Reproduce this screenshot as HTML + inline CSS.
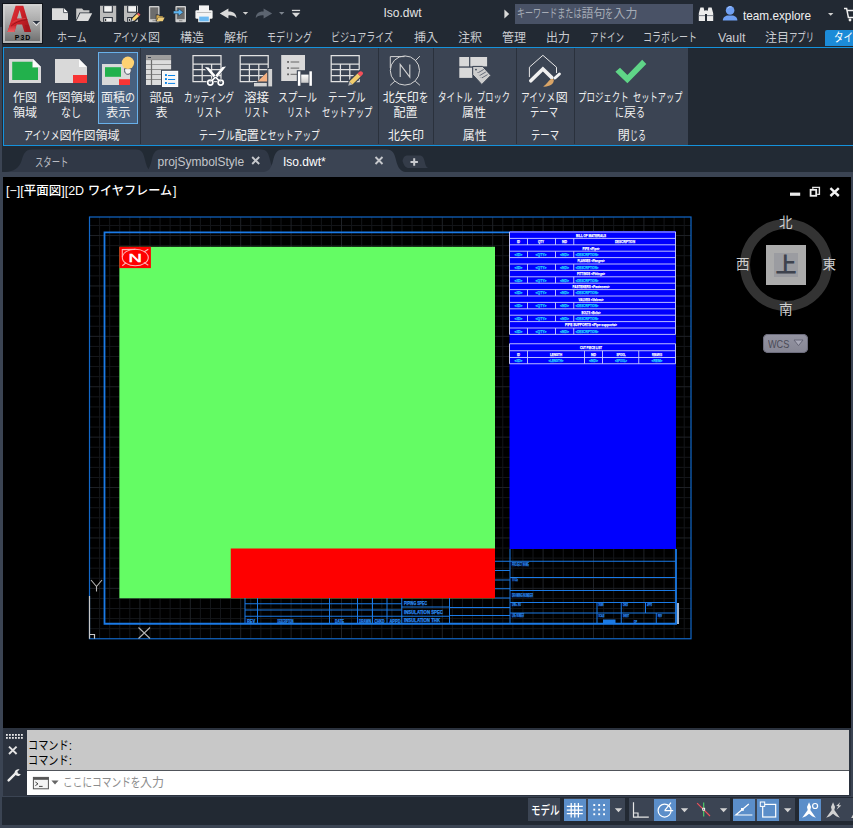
<!DOCTYPE html>
<html lang="ja"><head><meta charset="utf-8"><title>Iso.dwt</title>
<style>
html,body{margin:0;padding:0;background:#3b4453;}
body{width:853px;height:828px;position:relative;overflow:hidden;font-family:"Liberation Sans","Noto Sans CJK JP",sans-serif;font-size:12px;}
.b{position:absolute;}
.t{position:absolute;white-space:nowrap;}
.r{display:inline-block;transform-origin:0 50%;white-space:nowrap;vertical-align:top;}
svg{position:absolute;overflow:visible;}
</style></head><body>
<div class="b" style="left:0px;top:0px;width:853px;height:47px;background:#222933;"></div>
<div class="b" style="left:0px;top:27px;width:2px;height:20px;background:#3b4453;"></div>
<div class="b" style="left:0px;top:47px;width:853px;height:99px;background:#222933;"></div>
<div class="b" style="left:4px;top:48px;width:684px;height:97px;background:#3b4453;"></div>
<div class="b" style="left:0px;top:47px;width:2px;height:125px;background:#3b4453;"></div>
<div class="b" style="left:3px;top:47px;width:850px;height:1px;background:#1592dc;"></div>
<div class="b" style="left:3px;top:145px;width:850px;height:1px;background:#1592dc;"></div>
<div class="b" style="left:3px;top:47px;width:1px;height:99px;background:#1592dc;"></div>
<div class="b" style="left:2px;top:146px;width:851px;height:26px;background:#222a34;"></div>
<div class="b" style="left:0px;top:172px;width:853px;height:656px;background:#3b4453;"></div>
<div class="b" style="left:3px;top:177px;width:848px;height:551px;background:#000;"></div>
<div class="b" style="left:3px;top:728px;width:848px;height:67.5px;background:#2b323e;"></div>
<div class="b" style="left:27px;top:730px;width:822px;height:40px;background:#c8c8c8;"></div>
<div class="b" style="left:27px;top:771px;width:822px;height:24px;background:#fff;"></div>
<div class="b" style="left:27px;top:770px;width:822px;height:1px;background:#50545a;"></div>
<div class="b" style="left:2px;top:797px;width:851px;height:28px;background:#222933;"></div>
<div class="b" style="left:2.4px;top:3.2px;width:40.6px;height:40.6px;background:#10141a"></div>
<div class="b" style="left:3.4px;top:4.2px;width:38.6px;height:38.6px;background:linear-gradient(#d2d2d2,#b4b4b4)"></div>
<div class="b" style="left:5.2px;top:5.8px;width:35px;height:35.2px;background:linear-gradient(#c9c9c9,#a9a9a9 45%,#727272)"></div>
<div class="t" style="left:57.00px;top:29.50px;height:16px;line-height:16px;font-size:12px;color:#c9cbd0;"><span class="r" style="width:30.00px;transform:scaleX(0.8333)">ホーム</span></div>
<div class="t" style="left:113.00px;top:29.50px;height:16px;line-height:16px;font-size:12px;color:#c9cbd0;"><span class="r" style="width:35.00px;transform:scaleX(0.7292)">アイソメ</span><span class="r" style="width:12.00px">図</span></div>
<div class="t" style="left:180.00px;top:29.50px;height:16px;line-height:16px;font-size:12px;color:#c9cbd0;"><span class="r" style="width:24.00px">構造</span></div>
<div class="t" style="left:224.00px;top:29.50px;height:16px;line-height:16px;font-size:12px;color:#c9cbd0;"><span class="r" style="width:24.00px">解析</span></div>
<div class="t" style="left:267.00px;top:29.50px;height:16px;line-height:16px;font-size:12px;color:#c9cbd0;"><span class="r" style="width:45.00px;transform:scaleX(0.7500)">モデリング</span></div>
<div class="t" style="left:331.00px;top:29.50px;height:16px;line-height:16px;font-size:12px;color:#c9cbd0;"><span class="r" style="width:63.00px;transform:scaleX(0.7500)">ビジュアライズ</span></div>
<div class="t" style="left:414.00px;top:29.50px;height:16px;line-height:16px;font-size:12px;color:#c9cbd0;"><span class="r" style="width:24.00px">挿入</span></div>
<div class="t" style="left:458.00px;top:29.50px;height:16px;line-height:16px;font-size:12px;color:#c9cbd0;"><span class="r" style="width:24.00px">注釈</span></div>
<div class="t" style="left:502.00px;top:29.50px;height:16px;line-height:16px;font-size:12px;color:#c9cbd0;"><span class="r" style="width:24.00px">管理</span></div>
<div class="t" style="left:546.00px;top:29.50px;height:16px;line-height:16px;font-size:12px;color:#c9cbd0;"><span class="r" style="width:24.00px">出力</span></div>
<div class="t" style="left:590.00px;top:29.50px;height:16px;line-height:16px;font-size:12px;color:#c9cbd0;"><span class="r" style="width:34.00px;transform:scaleX(0.7083)">アドイン</span></div>
<div class="t" style="left:643.00px;top:29.50px;height:16px;line-height:16px;font-size:12px;color:#c9cbd0;"><span class="r" style="width:54.00px;transform:scaleX(0.7500)">コラボレート</span></div>
<div class="t" style="left:718.00px;top:29.50px;height:16px;line-height:16px;font-size:12px;color:#c9cbd0;"><span class="r" style="width:27.50px;transform:scaleX(1.0393)">Vault</span></div>
<div class="t" style="left:765.00px;top:29.50px;height:16px;line-height:16px;font-size:12px;color:#c9cbd0;"><span class="r" style="width:24.00px">注目</span><span class="r" style="width:25.00px;transform:scaleX(0.6944)">アプリ</span></div>
<div class="b" style="left:825px;top:30px;width:28px;height:16px;background:#1c8bd8;border-radius:2px 0 0 0"></div>
<div class="t" style="left:834.00px;top:29.50px;height:16px;line-height:16px;font-size:12px;color:#fff;"><span class="r" style="width:19.00px;transform:scaleX(0.7917)">タイ</span></div>
<div class="t" style="left:383.50px;top:5.00px;height:16px;line-height:16px;font-size:12px;color:#e4e4e4;"><span class="r" style="width:37.50px">Iso.dwt</span></div>
<div class="b" style="left:514.7px;top:4px;width:178px;height:20px;background:#495266;"></div>
<div class="t" style="left:517.00px;top:6.00px;height:16px;line-height:16px;font-size:12px;color:#a6acb6;"><span class="r" style="width:64.44px;transform:scaleX(0.6713)">キーワードまたは</span><span class="r" style="width:24.00px">語句</span><span class="r" style="width:8.06px;transform:scaleX(0.6713)">を</span><span class="r" style="width:24.00px">入力</span></div>
<div class="t" style="left:743.00px;top:7.50px;height:16px;line-height:16px;font-size:13px;color:#f0f0f0;"><span class="r" style="width:68.00px;transform:scaleX(0.9049)">team.explore</span></div>
<div class="b" style="left:98px;top:52px;width:40px;height:72px;background:#47607f;border:1px solid #68b0ea;box-sizing:border-box"></div>
<div class="b" style="left:140px;top:48px;width:1px;height:96px;background:#2a313c;"></div>
<div class="b" style="left:378px;top:48px;width:1px;height:96px;background:#2a313c;"></div>
<div class="b" style="left:433px;top:48px;width:1px;height:96px;background:#2a313c;"></div>
<div class="b" style="left:516px;top:48px;width:1px;height:96px;background:#2a313c;"></div>
<div class="b" style="left:574px;top:48px;width:1px;height:96px;background:#2a313c;"></div>
<div class="t" style="left:12.90px;top:90.00px;height:16px;line-height:16px;font-size:12px;color:#f0f0f0;"><span class="r" style="width:24.00px">作図</span></div>
<div class="t" style="left:12.90px;top:105.00px;height:16px;line-height:16px;font-size:12px;color:#f0f0f0;"><span class="r" style="width:24.00px">領域</span></div>
<div class="t" style="left:46.20px;top:90.00px;height:16px;line-height:16px;font-size:12px;color:#f0f0f0;"><span class="r" style="width:49.00px;transform:scaleX(1.0208)">作図領域</span></div>
<div class="t" style="left:60.70px;top:105.00px;height:16px;line-height:16px;font-size:12px;color:#f0f0f0;"><span class="r" style="width:20.00px;transform:scaleX(0.8333)">なし</span></div>
<div class="t" style="left:100.90px;top:90.00px;height:16px;line-height:16px;font-size:12px;color:#f0f0f0;"><span class="r" style="width:24.00px">面積</span><span class="r" style="width:10.00px;transform:scaleX(0.8333)">の</span></div>
<div class="t" style="left:105.65px;top:105.00px;height:16px;line-height:16px;font-size:12px;color:#f0f0f0;"><span class="r" style="width:24.50px;transform:scaleX(1.0208)">表示</span></div>
<div class="t" style="left:149.40px;top:90.00px;height:16px;line-height:16px;font-size:12px;color:#f0f0f0;"><span class="r" style="width:24.00px">部品</span></div>
<div class="t" style="left:155.40px;top:105.00px;height:16px;line-height:16px;font-size:12px;color:#f0f0f0;"><span class="r" style="width:12.00px">表</span></div>
<div class="t" style="left:183.85px;top:90.00px;height:16px;line-height:16px;font-size:12px;color:#f0f0f0;"><span class="r" style="width:50.50px;transform:scaleX(0.7014)">カッティング</span></div>
<div class="t" style="left:196.30px;top:105.00px;height:16px;line-height:16px;font-size:12px;color:#f0f0f0;"><span class="r" style="width:26.00px;transform:scaleX(0.7222)">リスト</span></div>
<div class="t" style="left:243.50px;top:90.00px;height:16px;line-height:16px;font-size:12px;color:#f0f0f0;"><span class="r" style="width:25.00px;transform:scaleX(1.0417)">溶接</span></div>
<div class="t" style="left:243.70px;top:105.00px;height:16px;line-height:16px;font-size:12px;color:#f0f0f0;"><span class="r" style="width:25.00px;transform:scaleX(0.6944)">リスト</span></div>
<div class="t" style="left:277.50px;top:90.00px;height:16px;line-height:16px;font-size:12px;color:#f0f0f0;"><span class="r" style="width:39.00px;transform:scaleX(0.8125)">スプール</span></div>
<div class="t" style="left:287.00px;top:105.00px;height:16px;line-height:16px;font-size:12px;color:#f0f0f0;"><span class="r" style="width:24.00px;transform:scaleX(0.6667)">リスト</span></div>
<div class="t" style="left:328.00px;top:90.00px;height:16px;line-height:16px;font-size:12px;color:#f0f0f0;"><span class="r" style="width:38.00px;transform:scaleX(0.7917)">テーブル</span></div>
<div class="t" style="left:322.35px;top:105.00px;height:16px;line-height:16px;font-size:12px;color:#f0f0f0;"><span class="r" style="width:50.50px;transform:scaleX(0.7014)">セットアップ</span></div>
<div class="t" style="left:382.65px;top:90.00px;height:16px;line-height:16px;font-size:12px;color:#f0f0f0;"><span class="r" style="width:36.00px">北矢印</span><span class="r" style="width:9.50px;transform:scaleX(0.7917)">を</span></div>
<div class="t" style="left:393.40px;top:105.00px;height:16px;line-height:16px;font-size:12px;color:#f0f0f0;"><span class="r" style="width:24.00px">配置</span></div>
<div class="t" style="left:438.40px;top:90.00px;height:16px;line-height:16px;font-size:12px;color:#f0f0f0;"><span class="r" style="width:34.16px;transform:scaleX(0.7117)">タイトル</span><span class="r" style="width:3.96px">&nbsp;</span><span class="r" style="width:32.88px;transform:scaleX(0.6850)">ブロック</span></div>
<div class="t" style="left:461.90px;top:105.00px;height:16px;line-height:16px;font-size:12px;color:#f0f0f0;"><span class="r" style="width:24.00px">属性</span></div>
<div class="t" style="left:521.15px;top:90.00px;height:16px;line-height:16px;font-size:12px;color:#f0f0f0;"><span class="r" style="width:34.50px;transform:scaleX(0.7188)">アイソメ</span><span class="r" style="width:12.00px">図</span></div>
<div class="t" style="left:530.40px;top:105.00px;height:16px;line-height:16px;font-size:12px;color:#f0f0f0;"><span class="r" style="width:28.00px;transform:scaleX(0.7778)">テーマ</span></div>
<div class="t" style="left:578.10px;top:90.00px;height:16px;line-height:16px;font-size:12px;color:#f0f0f0;"><span class="r" style="width:50.67px;transform:scaleX(0.7037)">プロジェクト</span><span class="r" style="width:3.96px">&nbsp;</span><span class="r" style="width:49.37px;transform:scaleX(0.6857)">セットアップ</span></div>
<div class="t" style="left:615.10px;top:105.00px;height:16px;line-height:16px;font-size:12px;color:#f0f0f0;"><span class="r" style="width:9.00px;transform:scaleX(0.7500)">に</span><span class="r" style="width:12.00px">戻</span><span class="r" style="width:9.00px;transform:scaleX(0.7500)">る</span></div>
<div class="t" style="left:23.50px;top:128.00px;height:16px;line-height:16px;font-size:12px;color:#f0f0f0;"><span class="r" style="width:36.00px;transform:scaleX(0.7500)">アイソメ</span><span class="r" style="width:60.00px">図作図領域</span></div>
<div class="t" style="left:198.50px;top:128.00px;height:16px;line-height:16px;font-size:12px;color:#f0f0f0;"><span class="r" style="width:36.26px;transform:scaleX(0.7555)">テーブル</span><span class="r" style="width:24.00px">配置</span><span class="r" style="width:60.74px;transform:scaleX(0.7231)">とセットアップ</span></div>
<div class="t" style="left:388.00px;top:128.00px;height:16px;line-height:16px;font-size:12px;color:#f0f0f0;"><span class="r" style="width:36.00px">北矢印</span></div>
<div class="t" style="left:462.80px;top:128.00px;height:16px;line-height:16px;font-size:12px;color:#f0f0f0;"><span class="r" style="width:24.00px">属性</span></div>
<div class="t" style="left:530.60px;top:128.00px;height:16px;line-height:16px;font-size:12px;color:#f0f0f0;"><span class="r" style="width:28.00px;transform:scaleX(0.7778)">テーマ</span></div>
<div class="t" style="left:617.70px;top:128.00px;height:16px;line-height:16px;font-size:12px;color:#f0f0f0;"><span class="r" style="width:12.00px">閉</span><span class="r" style="width:16.00px;transform:scaleX(0.6667)">じる</span></div>
<svg class="b" style="left:0;top:146px" width="853" height="31" viewBox="0 146 853 31">
<path d="M5 172 C14 171.5 19 168 21.5 161 C23.5 154 25 149.5 32 149.5 L136 149.5 C142.5 149.5 143.5 154 145 160 C146.5 166 148 171 153 172 Z" fill="#303846"/>
<path d="M144 172 C148.5 171 150 167 151.5 161 C153 154 154.5 149.5 161 149.5 L261 149.5 C267.5 149.5 268.5 154 270 160 C271.5 166 273 171 278 172 Z" fill="#303846"/>
<path d="M264 172 C269.5 171 271.5 167 273 161 C274.5 154 276.5 149.5 283 149.5 L386.5 149.5 C393 149.5 394.5 154 396 160 C397.5 166 399.5 171 405 172 Z" fill="#3b4453"/>
<path d="M402.5 161 C403.5 157 404.5 155.5 408 155.5 L419 155.5 C422.5 155.5 423.5 157 424.5 161 C425.5 165 426 167 428 168 L409 168 C405.5 168 404 165.5 402.5 161 Z" fill="#343c49"/>
<path d="M410.5 162 h7.4 M414.2 158.3 v7.4" stroke="#c8cace" stroke-width="2" fill="none"/>
<path d="M252.2 157 l7 7 M259.2 157 l-7 7" stroke="#c6c8cc" stroke-width="1.9" fill="none"/>
<path d="M375.5 157 l7 7 M382.5 157 l-7 7" stroke="#c6c8cc" stroke-width="1.9" fill="none"/>
</svg>
<div class="t" style="left:34.50px;top:154.50px;height:16px;line-height:16px;font-size:12px;color:#b9bcc2;"><span class="r" style="width:33.50px;transform:scaleX(0.6979)">スタート</span></div>
<div class="t" style="left:157.50px;top:154.00px;height:16px;line-height:16px;font-size:12px;color:#c4c6ca;"><span class="r" style="width:85.50px">projSymbolStyle</span></div>
<div class="t" style="left:283.00px;top:154.00px;height:16px;line-height:16px;font-size:12px;color:#ffffff;"><span class="r" style="width:43.00px">Iso.dwt*</span></div>
<div class="t" style="left:6.00px;top:183.00px;height:16px;line-height:16px;font-size:12.5px;color:#ffffff;font-weight:500;"><span class="r" style="width:17.72px">[−][</span><span class="r" style="width:37.50px">平面図</span><span class="r" style="width:22.92px">][2D</span><span class="r" style="width:4.12px">&nbsp;</span><span class="r" style="width:84.76px;transform:scaleX(0.9687)">ワイヤフレーム</span><span class="r" style="width:3.47px">]</span></div>
<div class="t" style="left:28.00px;top:737.50px;height:16px;line-height:16px;font-size:12px;color:#000;"><span class="r" style="width:40.67px;transform:scaleX(0.8472)">コマンド</span><span class="r" style="width:3.33px">:</span></div>
<div class="t" style="left:28.00px;top:753.00px;height:16px;line-height:16px;font-size:12px;color:#000;"><span class="r" style="width:40.67px;transform:scaleX(0.8472)">コマンド</span><span class="r" style="width:3.33px">:</span></div>
<div class="t" style="left:62.50px;top:774.50px;height:16px;line-height:16px;font-size:12px;color:#8c8c8c;"><span class="r" style="width:77.50px;transform:scaleX(0.8073)">ここにコマンドを</span><span class="r" style="width:24.00px">入力</span></div>
<div class="b" style="left:528px;top:798px;width:32px;height:23.4px;background:#3b4453;"></div>
<div class="b" style="left:563.6px;top:798px;width:61.4px;height:23.4px;background:#3b4453;"></div>
<div class="b" style="left:628.8px;top:798px;width:101px;height:23.4px;background:#3b4453;"></div>
<div class="b" style="left:732.6px;top:798px;width:62px;height:23.4px;background:#3b4453;"></div>
<div class="b" style="left:798.6px;top:798px;width:54.4px;height:23.4px;background:#3b4453;"></div>
<div class="t" style="left:531.00px;top:802.50px;height:16px;line-height:16px;font-size:12px;color:#ffffff;font-weight:500;"><span class="r" style="width:28.50px;transform:scaleX(0.7917)">モデル</span></div>
<div class="b" style="left:563.7px;top:799px;width:22px;height:22px;background:#5b8ec9;"></div>
<div class="b" style="left:588px;top:799px;width:22px;height:22px;background:#5b8ec9;"></div>
<div class="b" style="left:654px;top:799px;width:22px;height:22px;background:#5b8ec9;"></div>
<div class="b" style="left:732.8px;top:799px;width:22px;height:22px;background:#5b8ec9;"></div>
<div class="b" style="left:757.2px;top:799px;width:22px;height:22px;background:#5b8ec9;"></div>
<div class="b" style="left:799px;top:799px;width:22px;height:22px;background:#5b8ec9;"></div>
<div class="b" style="left:739.5px;top:219px;width:92px;height:92px;border-radius:50%;border:10.5px solid #333;box-sizing:border-box"></div>
<div class="b" style="left:766px;top:245px;width:40px;height:40px;background:#ababab;"></div>
<div class="b" style="left:774px;top:253px;width:24.2px;height:23.6px;background:#9b9ca1;"></div>
<div class="t" style="left:775.60px;top:251.00px;height:28px;line-height:28px;font-size:21px;color:#3e434e;font-weight:700;"><span class="r" style="width:21.00px">上</span></div>
<div class="t" style="left:778.95px;top:213.70px;height:18px;line-height:18px;font-size:13.5px;color:#cdcdcd;"><span class="r" style="width:13.50px">北</span></div>
<div class="t" style="left:778.95px;top:300.70px;height:18px;line-height:18px;font-size:13.5px;color:#cdcdcd;"><span class="r" style="width:13.50px">南</span></div>
<div class="t" style="left:736.05px;top:256.20px;height:18px;line-height:18px;font-size:13.5px;color:#cdcdcd;"><span class="r" style="width:13.50px">西</span></div>
<div class="t" style="left:822.55px;top:255.70px;height:18px;line-height:18px;font-size:13.5px;color:#cdcdcd;"><span class="r" style="width:13.50px">東</span></div>
<div class="b" style="left:763px;top:333.5px;width:44.5px;height:19.5px;border-radius:5px;background:linear-gradient(#9494a2,#868694);box-shadow:inset 0 0 0 1px #6c6c7c"></div>
<div class="t" style="left:767.50px;top:335.60px;height:16px;line-height:16px;font-size:11.5px;color:#4a4a56;"><span class="r" style="width:21.30px;transform:scaleX(0.7939)">WCS</span></div>
<svg class="b" style="left:0;top:0" width="853" height="828" viewBox="0 0 853 828" font-family="'Liberation Sans',sans-serif">
<path d="M99.58 217.00V638.75M109.66 217.00V638.75M119.74 217.00V638.75M129.82 217.00V638.75M149.98 217.00V638.75M160.06 217.00V638.75M170.14 217.00V638.75M180.22 217.00V638.75M200.38 217.00V638.75M210.46 217.00V638.75M220.54 217.00V638.75M230.62 217.00V638.75M250.78 217.00V638.75M260.86 217.00V638.75M270.94 217.00V638.75M281.02 217.00V638.75M301.18 217.00V638.75M311.26 217.00V638.75M321.34 217.00V638.75M331.42 217.00V638.75M351.58 217.00V638.75M361.66 217.00V638.75M371.74 217.00V638.75M381.82 217.00V638.75M401.98 217.00V638.75M412.06 217.00V638.75M422.14 217.00V638.75M432.22 217.00V638.75M452.38 217.00V638.75M462.46 217.00V638.75M472.54 217.00V638.75M482.62 217.00V638.75M502.78 217.00V638.75M512.86 217.00V638.75M522.94 217.00V638.75M533.02 217.00V638.75M553.18 217.00V638.75M563.26 217.00V638.75M573.34 217.00V638.75M583.42 217.00V638.75M603.58 217.00V638.75M613.66 217.00V638.75M623.74 217.00V638.75M633.82 217.00V638.75M653.98 217.00V638.75M664.06 217.00V638.75M674.14 217.00V638.75M684.22 217.00V638.75M89.50 628.67H691.00M89.50 618.59H691.00M89.50 608.51H691.00M89.50 598.43H691.00M89.50 578.27H691.00M89.50 568.19H691.00M89.50 558.11H691.00M89.50 548.03H691.00M89.50 527.87H691.00M89.50 517.79H691.00M89.50 507.71H691.00M89.50 497.63H691.00M89.50 477.47H691.00M89.50 467.39H691.00M89.50 457.31H691.00M89.50 447.23H691.00M89.50 427.07H691.00M89.50 416.99H691.00M89.50 406.91H691.00M89.50 396.83H691.00M89.50 376.67H691.00M89.50 366.59H691.00M89.50 356.51H691.00M89.50 346.43H691.00M89.50 326.27H691.00M89.50 316.19H691.00M89.50 306.11H691.00M89.50 296.03H691.00M89.50 275.87H691.00M89.50 265.79H691.00M89.50 255.71H691.00M89.50 245.63H691.00M89.50 225.47H691.00" stroke="#14161a" stroke-width="1" fill="none"/>
<path d="M139.90 217.00V638.75M190.30 217.00V638.75M240.70 217.00V638.75M291.10 217.00V638.75M341.50 217.00V638.75M391.90 217.00V638.75M442.30 217.00V638.75M492.70 217.00V638.75M543.10 217.00V638.75M593.50 217.00V638.75M643.90 217.00V638.75M89.50 588.35H691.00M89.50 537.95H691.00M89.50 487.55H691.00M89.50 437.15H691.00M89.50 386.75H691.00M89.50 336.35H691.00M89.50 285.95H691.00M89.50 235.55H691.00" stroke="#1f2227" stroke-width="1" fill="none"/>
<rect x="119.4" y="246.8" width="375.6" height="351.5" fill="#64fc64"/>
<rect x="119.4" y="246.8" width="31.5" height="21.3" fill="#fe0000"/>
<rect x="230.75" y="548.5" width="264.25" height="49.7" fill="#fe0000"/>
<rect x="509.5" y="231" width="166.5" height="318" fill="#0000fe"/>
<rect x="89.5" y="217" width="601.5" height="421.75" fill="none" stroke="#1268c8" stroke-width="1.2"/>
<path d="M509.5 232.3H104.5V623.75H676V549" fill="none" stroke="#1a7ae6" stroke-width="1.8"/>
<g stroke="#ffb4b4" stroke-width="1.1" fill="none"><ellipse cx="135.3" cy="257.5" rx="13" ry="8.3"/><path d="M135.3 249.4L122.3 249.6V257M148.3 249.2L143.8 252M122.3 265.8L126.2 262.6M148.3 265.2L143.8 262.4"/></g>
<text x="135.1" y="261.9" font-size="11" fill="#fff" stroke="#fff" stroke-width=".45" text-anchor="middle" textLength="13.4" lengthAdjust="spacingAndGlyphs">N</text>
<path d="M509.5 232.00H675.5M509.5 238.40H675.5M509.5 244.80H675.5M509.5 251.20H675.5M509.5 257.60H675.5M509.5 264.00H675.5M509.5 270.40H675.5M509.5 276.80H675.5M509.5 283.20H675.5M509.5 289.60H675.5M509.5 296.00H675.5M509.5 302.40H675.5M509.5 308.80H675.5M509.5 315.20H675.5M509.5 321.60H675.5M509.5 328.00H675.5M509.5 334.40H675.5M509.5 232V334.40 M675.5 232V334.40M527.50 238.40V244.80M555.50 238.40V244.80M573.75 238.40V244.80M527.50 251.20V257.60M555.50 251.20V257.60M573.75 251.20V257.60M527.50 264.00V270.40M555.50 264.00V270.40M573.75 264.00V270.40M527.50 276.80V283.20M555.50 276.80V283.20M573.75 276.80V283.20M527.50 289.60V296.00M555.50 289.60V296.00M573.75 289.60V296.00M527.50 302.40V308.80M555.50 302.40V308.80M573.75 302.40V308.80M527.50 315.20V321.60M555.50 315.20V321.60M573.75 315.20V321.60M527.50 328.00V334.40M555.50 328.00V334.40M573.75 328.00V334.40" stroke="#cfd0ff" stroke-width="0.9" fill="none"/>
<text x="591.00" y="236.80" font-size="4.2" fill="#fff" text-anchor="middle" textLength="30.0" lengthAdjust="spacingAndGlyphs" font-weight="bold" stroke="#fff" stroke-width=".25">BILL OF MATERIALS</text>
<text x="518.50" y="243.20" font-size="4.2" fill="#fff" text-anchor="middle" textLength="3.0" lengthAdjust="spacingAndGlyphs" font-weight="bold" stroke="#fff" stroke-width=".25">ID</text>
<text x="541.00" y="243.20" font-size="4.2" fill="#fff" text-anchor="middle" textLength="6.0" lengthAdjust="spacingAndGlyphs" font-weight="bold" stroke="#fff" stroke-width=".25">QTY</text>
<text x="564.50" y="243.20" font-size="4.2" fill="#fff" text-anchor="middle" textLength="5.0" lengthAdjust="spacingAndGlyphs" font-weight="bold" stroke="#fff" stroke-width=".25">ND</text>
<text x="625.00" y="243.20" font-size="4.2" fill="#fff" text-anchor="middle" textLength="20.0" lengthAdjust="spacingAndGlyphs" font-weight="bold" stroke="#fff" stroke-width=".25">DESCRIPTION</text>
<text x="591.00" y="249.60" font-size="4.2" fill="#fff" text-anchor="middle" textLength="17.0" lengthAdjust="spacingAndGlyphs" font-weight="bold" stroke="#fff" stroke-width=".25">PIPE &lt;Pipe&gt;</text>
<text x="518.50" y="256.00" font-size="4.2" fill="#22d2ff" text-anchor="middle" textLength="8.0" lengthAdjust="spacingAndGlyphs" font-weight="bold" stroke="#22d2ff" stroke-width=".25">&lt;ID&gt;</text>
<text x="541.00" y="256.00" font-size="4.2" fill="#22d2ff" text-anchor="middle" textLength="11.0" lengthAdjust="spacingAndGlyphs" font-weight="bold" stroke="#22d2ff" stroke-width=".25">&lt;QTY&gt;</text>
<text x="564.50" y="256.00" font-size="4.2" fill="#22d2ff" text-anchor="middle" textLength="9.0" lengthAdjust="spacingAndGlyphs" font-weight="bold" stroke="#22d2ff" stroke-width=".25">&lt;ND&gt;</text>
<text x="575.50" y="256.00" font-size="4.2" fill="#22d2ff" text-anchor="start" textLength="23.0" lengthAdjust="spacingAndGlyphs" font-weight="bold" stroke="#22d2ff" stroke-width=".25">&lt;DESCRIPTION&gt;</text>
<text x="591.00" y="262.40" font-size="4.2" fill="#fff" text-anchor="middle" textLength="27.0" lengthAdjust="spacingAndGlyphs" font-weight="bold" stroke="#fff" stroke-width=".25">FLANGES &lt;Flanges&gt;</text>
<text x="518.50" y="268.80" font-size="4.2" fill="#22d2ff" text-anchor="middle" textLength="8.0" lengthAdjust="spacingAndGlyphs" font-weight="bold" stroke="#22d2ff" stroke-width=".25">&lt;ID&gt;</text>
<text x="541.00" y="268.80" font-size="4.2" fill="#22d2ff" text-anchor="middle" textLength="11.0" lengthAdjust="spacingAndGlyphs" font-weight="bold" stroke="#22d2ff" stroke-width=".25">&lt;QTY&gt;</text>
<text x="564.50" y="268.80" font-size="4.2" fill="#22d2ff" text-anchor="middle" textLength="9.0" lengthAdjust="spacingAndGlyphs" font-weight="bold" stroke="#22d2ff" stroke-width=".25">&lt;ND&gt;</text>
<text x="575.50" y="268.80" font-size="4.2" fill="#22d2ff" text-anchor="start" textLength="23.0" lengthAdjust="spacingAndGlyphs" font-weight="bold" stroke="#22d2ff" stroke-width=".25">&lt;DESCRIPTION&gt;</text>
<text x="591.00" y="275.20" font-size="4.2" fill="#fff" text-anchor="middle" textLength="28.0" lengthAdjust="spacingAndGlyphs" font-weight="bold" stroke="#fff" stroke-width=".25">FITTINGS &lt;Fittings&gt;</text>
<text x="518.50" y="281.60" font-size="4.2" fill="#22d2ff" text-anchor="middle" textLength="8.0" lengthAdjust="spacingAndGlyphs" font-weight="bold" stroke="#22d2ff" stroke-width=".25">&lt;ID&gt;</text>
<text x="541.00" y="281.60" font-size="4.2" fill="#22d2ff" text-anchor="middle" textLength="11.0" lengthAdjust="spacingAndGlyphs" font-weight="bold" stroke="#22d2ff" stroke-width=".25">&lt;QTY&gt;</text>
<text x="564.50" y="281.60" font-size="4.2" fill="#22d2ff" text-anchor="middle" textLength="9.0" lengthAdjust="spacingAndGlyphs" font-weight="bold" stroke="#22d2ff" stroke-width=".25">&lt;ND&gt;</text>
<text x="575.50" y="281.60" font-size="4.2" fill="#22d2ff" text-anchor="start" textLength="23.0" lengthAdjust="spacingAndGlyphs" font-weight="bold" stroke="#22d2ff" stroke-width=".25">&lt;DESCRIPTION&gt;</text>
<text x="591.00" y="288.00" font-size="4.2" fill="#fff" text-anchor="middle" textLength="37.0" lengthAdjust="spacingAndGlyphs" font-weight="bold" stroke="#fff" stroke-width=".25">FASTENERS &lt;Fasteners&gt;</text>
<text x="518.50" y="294.40" font-size="4.2" fill="#22d2ff" text-anchor="middle" textLength="8.0" lengthAdjust="spacingAndGlyphs" font-weight="bold" stroke="#22d2ff" stroke-width=".25">&lt;ID&gt;</text>
<text x="541.00" y="294.40" font-size="4.2" fill="#22d2ff" text-anchor="middle" textLength="11.0" lengthAdjust="spacingAndGlyphs" font-weight="bold" stroke="#22d2ff" stroke-width=".25">&lt;QTY&gt;</text>
<text x="564.50" y="294.40" font-size="4.2" fill="#22d2ff" text-anchor="middle" textLength="9.0" lengthAdjust="spacingAndGlyphs" font-weight="bold" stroke="#22d2ff" stroke-width=".25">&lt;ND&gt;</text>
<text x="575.50" y="294.40" font-size="4.2" fill="#22d2ff" text-anchor="start" textLength="23.0" lengthAdjust="spacingAndGlyphs" font-weight="bold" stroke="#22d2ff" stroke-width=".25">&lt;DESCRIPTION&gt;</text>
<text x="591.00" y="300.80" font-size="4.2" fill="#fff" text-anchor="middle" textLength="25.0" lengthAdjust="spacingAndGlyphs" font-weight="bold" stroke="#fff" stroke-width=".25">VALVES &lt;Valves&gt;</text>
<text x="518.50" y="307.20" font-size="4.2" fill="#22d2ff" text-anchor="middle" textLength="8.0" lengthAdjust="spacingAndGlyphs" font-weight="bold" stroke="#22d2ff" stroke-width=".25">&lt;ID&gt;</text>
<text x="541.00" y="307.20" font-size="4.2" fill="#22d2ff" text-anchor="middle" textLength="11.0" lengthAdjust="spacingAndGlyphs" font-weight="bold" stroke="#22d2ff" stroke-width=".25">&lt;QTY&gt;</text>
<text x="564.50" y="307.20" font-size="4.2" fill="#22d2ff" text-anchor="middle" textLength="9.0" lengthAdjust="spacingAndGlyphs" font-weight="bold" stroke="#22d2ff" stroke-width=".25">&lt;ND&gt;</text>
<text x="575.50" y="307.20" font-size="4.2" fill="#22d2ff" text-anchor="start" textLength="23.0" lengthAdjust="spacingAndGlyphs" font-weight="bold" stroke="#22d2ff" stroke-width=".25">&lt;DESCRIPTION&gt;</text>
<text x="591.00" y="313.60" font-size="4.2" fill="#fff" text-anchor="middle" textLength="19.0" lengthAdjust="spacingAndGlyphs" font-weight="bold" stroke="#fff" stroke-width=".25">BOLTS &lt;Bolts&gt;</text>
<text x="518.50" y="320.00" font-size="4.2" fill="#22d2ff" text-anchor="middle" textLength="8.0" lengthAdjust="spacingAndGlyphs" font-weight="bold" stroke="#22d2ff" stroke-width=".25">&lt;ID&gt;</text>
<text x="541.00" y="320.00" font-size="4.2" fill="#22d2ff" text-anchor="middle" textLength="11.0" lengthAdjust="spacingAndGlyphs" font-weight="bold" stroke="#22d2ff" stroke-width=".25">&lt;QTY&gt;</text>
<text x="564.50" y="320.00" font-size="4.2" fill="#22d2ff" text-anchor="middle" textLength="9.0" lengthAdjust="spacingAndGlyphs" font-weight="bold" stroke="#22d2ff" stroke-width=".25">&lt;ND&gt;</text>
<text x="575.50" y="320.00" font-size="4.2" fill="#22d2ff" text-anchor="start" textLength="23.0" lengthAdjust="spacingAndGlyphs" font-weight="bold" stroke="#22d2ff" stroke-width=".25">&lt;DESCRIPTION&gt;</text>
<text x="591.00" y="326.40" font-size="4.2" fill="#fff" text-anchor="middle" textLength="52.0" lengthAdjust="spacingAndGlyphs" font-weight="bold" stroke="#fff" stroke-width=".25">PIPE SUPPORTS &lt;Pipe supports&gt;</text>
<text x="518.50" y="332.80" font-size="4.2" fill="#22d2ff" text-anchor="middle" textLength="8.0" lengthAdjust="spacingAndGlyphs" font-weight="bold" stroke="#22d2ff" stroke-width=".25">&lt;ID&gt;</text>
<text x="541.00" y="332.80" font-size="4.2" fill="#22d2ff" text-anchor="middle" textLength="11.0" lengthAdjust="spacingAndGlyphs" font-weight="bold" stroke="#22d2ff" stroke-width=".25">&lt;QTY&gt;</text>
<text x="564.50" y="332.80" font-size="4.2" fill="#22d2ff" text-anchor="middle" textLength="9.0" lengthAdjust="spacingAndGlyphs" font-weight="bold" stroke="#22d2ff" stroke-width=".25">&lt;ND&gt;</text>
<text x="575.50" y="332.80" font-size="4.2" fill="#22d2ff" text-anchor="start" textLength="23.0" lengthAdjust="spacingAndGlyphs" font-weight="bold" stroke="#22d2ff" stroke-width=".25">&lt;DESCRIPTION&gt;</text>
<path d="M509.5 343.75H675.5M509.5 350.75H675.5M509.5 357.50H675.5M509.5 363.75H675.5M509.5 343.75V363.75M675.5 343.75V363.75M527.50 350.75V363.75M584.50 350.75V363.75M602.50 350.75V363.75M638.75 350.75V363.75" stroke="#cfd0ff" stroke-width="0.9" fill="none"/>
<text x="591.00" y="349.00" font-size="4.2" fill="#fff" text-anchor="middle" textLength="22.0" lengthAdjust="spacingAndGlyphs" font-weight="bold" stroke="#fff" stroke-width=".25">CUT PIECE LIST</text>
<text x="518.50" y="356.00" font-size="4.2" fill="#fff" text-anchor="middle" textLength="3.0" lengthAdjust="spacingAndGlyphs" font-weight="bold" stroke="#fff" stroke-width=".25">ID</text>
<text x="556.00" y="356.00" font-size="4.2" fill="#fff" text-anchor="middle" textLength="12.0" lengthAdjust="spacingAndGlyphs" font-weight="bold" stroke="#fff" stroke-width=".25">LENGTH</text>
<text x="593.50" y="356.00" font-size="4.2" fill="#fff" text-anchor="middle" textLength="5.0" lengthAdjust="spacingAndGlyphs" font-weight="bold" stroke="#fff" stroke-width=".25">ND</text>
<text x="621.00" y="356.00" font-size="4.2" fill="#fff" text-anchor="middle" textLength="9.0" lengthAdjust="spacingAndGlyphs" font-weight="bold" stroke="#fff" stroke-width=".25">SPOOL</text>
<text x="657.00" y="356.00" font-size="4.2" fill="#fff" text-anchor="middle" textLength="10.0" lengthAdjust="spacingAndGlyphs" font-weight="bold" stroke="#fff" stroke-width=".25">REMARKS</text>
<text x="518.50" y="362.40" font-size="4.2" fill="#22d2ff" text-anchor="middle" textLength="8.0" lengthAdjust="spacingAndGlyphs" font-weight="bold" stroke="#22d2ff" stroke-width=".25">&lt;ID&gt;</text>
<text x="556.00" y="362.40" font-size="4.2" fill="#22d2ff" text-anchor="middle" textLength="15.0" lengthAdjust="spacingAndGlyphs" font-weight="bold" stroke="#22d2ff" stroke-width=".25">&lt;LENGTH&gt;</text>
<text x="593.50" y="362.40" font-size="4.2" fill="#22d2ff" text-anchor="middle" textLength="9.0" lengthAdjust="spacingAndGlyphs" font-weight="bold" stroke="#22d2ff" stroke-width=".25">&lt;ND&gt;</text>
<text x="621.00" y="362.40" font-size="4.2" fill="#22d2ff" text-anchor="middle" textLength="12.0" lengthAdjust="spacingAndGlyphs" font-weight="bold" stroke="#22d2ff" stroke-width=".25">&lt;SPOOL&gt;</text>
<text x="657.00" y="362.40" font-size="4.2" fill="#22d2ff" text-anchor="middle" textLength="11.0" lengthAdjust="spacingAndGlyphs" font-weight="bold" stroke="#22d2ff" stroke-width=".25">&lt;REM&gt;</text>
<path d="M510 561.25H676M510 577.50H676M510 590.50H676M510 602.50H676M510 613.00H676M510 549V623.75M597 602.5V623.75M621.25 602.5V623.75M645.5 602.5V613M656.25 613V623.75M495 561.25H510M495 570.50H510M495 580.00H510M495 588.75H510M495 598.00H510M449.5 607.5H510M449.5 615.5H510M245 598V623.75M257.5 598V623.75M329.5 598V623.75M357.5 598V623.75M372.5 598V623.75M387 598V623.75M401.75 598V623.75M449.5 598V623.75M245 603.75H401.75M245 610H401.75M245 616.25H449.5M401.75 607H449.5" stroke="#1a7ae6" stroke-width="1" fill="none"/>
<rect x="603" y="619.5" width="12.5" height="4.25" fill="#1a7ae6"/>
<rect x="677" y="603" width="2" height="21" fill="#9fb4d0"/>
<text x="512.00" y="565.50" font-size="4.5" fill="#2a8af0" text-anchor="start" textLength="17.0" lengthAdjust="spacingAndGlyphs" font-weight="bold" stroke="#2a8af0" stroke-width=".25">PROJECT NAME</text>
<text x="512.00" y="580.50" font-size="4.5" fill="#2a8af0" text-anchor="start" textLength="6.0" lengthAdjust="spacingAndGlyphs" font-weight="bold" stroke="#2a8af0" stroke-width=".25">TITLE</text>
<text x="512.00" y="596.50" font-size="4.5" fill="#2a8af0" text-anchor="start" textLength="21.0" lengthAdjust="spacingAndGlyphs" font-weight="bold" stroke="#2a8af0" stroke-width=".25">DRAWING NUMBER</text>
<text x="512.00" y="606.30" font-size="4.5" fill="#2a8af0" text-anchor="start" textLength="9.0" lengthAdjust="spacingAndGlyphs" font-weight="bold" stroke="#2a8af0" stroke-width=".25">DWG. NO</text>
<text x="512.00" y="617.30" font-size="4.5" fill="#2a8af0" text-anchor="start" textLength="12.0" lengthAdjust="spacingAndGlyphs" font-weight="bold" stroke="#2a8af0" stroke-width=".25">LINE NUMBER</text>
<text x="598.50" y="606.00" font-size="3.5" fill="#2a8af0" text-anchor="start" textLength="5.0" lengthAdjust="spacingAndGlyphs" font-weight="bold" stroke="#2a8af0" stroke-width=".25">DRAWN</text>
<text x="623.00" y="606.30" font-size="3.5" fill="#2a8af0" text-anchor="start" textLength="5.0" lengthAdjust="spacingAndGlyphs" font-weight="bold" stroke="#2a8af0" stroke-width=".25">CHKD</text>
<text x="647.00" y="606.30" font-size="3.5" fill="#2a8af0" text-anchor="start" textLength="5.0" lengthAdjust="spacingAndGlyphs" font-weight="bold" stroke="#2a8af0" stroke-width=".25">APPD</text>
<text x="598.50" y="616.70" font-size="3.5" fill="#2a8af0" text-anchor="start" textLength="6.0" lengthAdjust="spacingAndGlyphs" font-weight="bold" stroke="#2a8af0" stroke-width=".25">SCALE</text>
<text x="623.00" y="616.70" font-size="3.5" fill="#2a8af0" text-anchor="start" textLength="6.0" lengthAdjust="spacingAndGlyphs" font-weight="bold" stroke="#2a8af0" stroke-width=".25">SHEET</text>
<text x="658.00" y="617.00" font-size="3.5" fill="#2a8af0" text-anchor="start" textLength="4.0" lengthAdjust="spacingAndGlyphs" font-weight="bold" stroke="#2a8af0" stroke-width=".25">REV</text>
<text x="634.00" y="623.00" font-size="3.2" fill="#2a8af0" text-anchor="start" textLength="3.0" lengthAdjust="spacingAndGlyphs" font-weight="bold" stroke="#2a8af0" stroke-width=".25">OF</text>
<text x="247.00" y="622.50" font-size="4.5" fill="#2a8af0" text-anchor="start" textLength="8.0" lengthAdjust="spacingAndGlyphs" font-weight="bold" stroke="#2a8af0" stroke-width=".25">REV</text>
<text x="277.50" y="622.50" font-size="4.5" fill="#2a8af0" text-anchor="start" textLength="16.0" lengthAdjust="spacingAndGlyphs" font-weight="bold" stroke="#2a8af0" stroke-width=".25">DESCRIPTION</text>
<text x="335.00" y="622.50" font-size="4.5" fill="#2a8af0" text-anchor="start" textLength="9.0" lengthAdjust="spacingAndGlyphs" font-weight="bold" stroke="#2a8af0" stroke-width=".25">DATE</text>
<text x="359.00" y="622.50" font-size="4.5" fill="#2a8af0" text-anchor="start" textLength="12.0" lengthAdjust="spacingAndGlyphs" font-weight="bold" stroke="#2a8af0" stroke-width=".25">DRAWN</text>
<text x="374.50" y="622.50" font-size="4.5" fill="#2a8af0" text-anchor="start" textLength="10.0" lengthAdjust="spacingAndGlyphs" font-weight="bold" stroke="#2a8af0" stroke-width=".25">CHKD</text>
<text x="389.50" y="622.50" font-size="4.5" fill="#2a8af0" text-anchor="start" textLength="11.0" lengthAdjust="spacingAndGlyphs" font-weight="bold" stroke="#2a8af0" stroke-width=".25">APPD</text>
<text x="404.00" y="604.80" font-size="5" fill="#2a8af0" text-anchor="start" textLength="23.0" lengthAdjust="spacingAndGlyphs" font-weight="bold" stroke="#2a8af0" stroke-width=".25">PIPING SPEC</text>
<text x="404.00" y="614.00" font-size="5" fill="#2a8af0" text-anchor="start" textLength="39.0" lengthAdjust="spacingAndGlyphs" font-weight="bold" stroke="#2a8af0" stroke-width=".25">INSULATION SPEC</text>
<text x="404.00" y="622.30" font-size="5" fill="#2a8af0" text-anchor="start" textLength="36.0" lengthAdjust="spacingAndGlyphs" font-weight="bold" stroke="#2a8af0" stroke-width=".25">INSULATION THK</text>
<path d="M89.5 596V638.75M89.5 634.5H94.5V638.75" stroke="#c8c8c8" stroke-width="1.2" fill="none"/>
<path d="M91 580l5.5 6.5l5.5-6.5M96.5 586.5V591.5" stroke="#b4b4b4" stroke-width="1.1" fill="none"/>
<path d="M138.5 627.5l11.5 11M150 627.5l-11.5 11" stroke="#b4b4b4" stroke-width="1.1" fill="none"/>
</svg>
<svg class="b" style="left:0;top:0" width="853" height="828" viewBox="0 0 853 828" font-family="'Liberation Sans',sans-serif">
<defs>
<linearGradient id="gA" x1="0" y1="0" x2="1" y2=".6"><stop offset="0" stop-color="#dc3a40"/><stop offset=".55" stop-color="#cf2129"/><stop offset="1" stop-color="#a8181f"/></linearGradient><linearGradient id="gL" x1="0" y1="0" x2="0" y2="1"><stop offset="0" stop-color="#cf2830"/><stop offset="1" stop-color="#ee6064"/></linearGradient>
<linearGradient id="gP" x1="0" y1="0" x2="0" y2="1"><stop offset="0" stop-color="#ffffff"/><stop offset="1" stop-color="#c9c9c9"/></linearGradient>
</defs>
<path fill-rule="evenodd" d="M15.6 5.8H23.3L31.1 32H24.4L22.1 24.4H16.75L14.4 32H7.5ZM19.7 9.9L21.9 18.6H16.9Z" fill="url(#gA)"/>
<path d="M9.6 25.2L7.5 32H14.4L16.2 26.2Z" fill="url(#gL)"/>
<path d="M24.8 25L26.6 32H31.1L29 25Z" fill="#a3161d" opacity=".7"/>
<path d="M11 26.2C14.5 22.6 21 20 27.4 19.6" stroke="#8c1218" stroke-width="1" fill="none" opacity=".75"/>
<path d="M12.4 22.6C15.5 20.4 20 18.9 25.6 18.4" stroke="#e85258" stroke-width=".8" fill="none" opacity=".7"/>
<text x="14.7" y="39.7" font-size="6.9" font-weight="bold" fill="#000" textLength="15.6" lengthAdjust="spacing">P3D</text>
<path d="M32.8 22H40L36.4 26Z" fill="#f2f2f2"/><path d="M32.8 21H40L36.4 24.6Z" fill="#2c3442"/>
<path d="M52 8.2H63.8L68 12.4V20H52Z" fill="#dcdcdc"/><path d="M63.8 8.2V12.4H68Z" fill="#ffffff"/><path d="M63.6 8.2V12.6H68" stroke="#222933" stroke-width=".7" fill="none"/>
<path d="M76.2 8.4H82L83.6 10.2H89.4V12.6H79.6L76.2 20Z" fill="#c9c9c9"/><path d="M80.2 13.2H92.2L88.2 20.9H76.4Z" fill="#dcdcdc"/>
<path d="M100.0 5.8H116.2V21.9H101.6L100.0 20.4Z" fill="#bcbcbc"/>
<rect x="103.2" y="5.8" width="9.6" height="6.9" fill="#222933"/><rect x="104.2" y="6.1" width="7.6" height="5.6" fill="#f3f3f3"/>
<rect x="103.2" y="17.1" width="9.6" height="4.8" fill="#222933"/><rect x="104.2" y="18.1" width="7.6" height="3.6" fill="#f3f3f3"/><rect x="104.9" y="18.8" width="1.3" height="2.3" fill="#333"/>
<path d="M124.0 5.8H138.0V21.9H125.6L124.0 20.4Z" fill="#bcbcbc"/>
<rect x="127.2" y="5.8" width="9.8" height="6.9" fill="#222933"/><rect x="128.2" y="6.1" width="7.8" height="5.6" fill="#f3f3f3"/>
<rect x="127.2" y="17.1" width="6.2" height="4.8" fill="#222933"/><rect x="128.2" y="18.1" width="4.2" height="3.6" fill="#f3f3f3"/><rect x="128.9" y="18.8" width="1.3" height="2.3" fill="#333"/>
<path d="M130.4 22.6L131.2 18.2L137.6 11.9L141.6 15.4L135 22Z" fill="#222933"/>
<path d="M131.3 21.6L132.1 18.8L134.2 20.8Z" fill="#d8d8d8"/><path d="M132.1 18.8L137 13.9L139.2 16L134.2 20.8Z" fill="#ffd66e"/><path d="M137 13.9L138.2 12.7L140.5 14.8L139.2 16Z" fill="#f4525a"/>
<rect x="148.9" y="5.9" width="10.6" height="16.3" rx="1" fill="#cfcfcf"/><rect x="150.2" y="7.4" width="8" height="11.8" fill="#6d6d6d"/><rect x="152.5" y="20.2" width="3.4" height="1" fill="#888"/>
<path d="M155.8 14.6H159L159.8 15.6H163.4V21.6H155.8Z" fill="#222933"/><path d="M156.4 15.2H158.8L159.6 16.2H162.8V17.4H158L156.4 21Z" fill="#d2a84e"/><path d="M158.4 17.6H164.6L162.8 21.2H156.6Z" fill="#f0cd78"/>
<rect x="175.4" y="5.9" width="10.6" height="16.3" rx="1" fill="#cfcfcf"/><rect x="176.7" y="7.4" width="8" height="11.8" fill="#6d6d6d"/><rect x="179.0" y="20.2" width="3.4" height="1" fill="#888"/>
<path d="M173.4 10.9H178.4V8.6L183.4 12.3L178.4 16V13.7H173.4Z" fill="#5eb6f2" stroke="#222933" stroke-width=".5"/>
<rect x="199" y="5.4" width="10" height="6" fill="#f4f4f4"/><rect x="195.4" y="10.2" width="17.2" height="8.6" rx="1.2" fill="#f4f4f4"/><rect x="198.2" y="15.6" width="11.6" height="6.6" fill="#f4f4f4"/><rect x="199.2" y="16.6" width="9.6" height="4.8" fill="#6dbaf2"/><rect x="196.8" y="12" width="14.4" height="1" fill="#bdbdbd"/>
<path d="M219.8 13.4L228.4 8.6V11.6C233.4 11.4 236.4 13.8 236.4 18.2C234.8 16 232.4 15.2 228.4 15.4V18.4Z" fill="#d9d9d9"/>
<path d="M242.8 12H248.2L245.5 14.8Z" fill="#d0d0d0"/>
<path d="M272.2 13.4L263.6 8.6V11.6C258.6 11.4 255.8 13.8 255.8 18.2C257.4 16 259.6 15.2 263.6 15.4V18.4Z" fill="#5c6470"/>
<path d="M279 12H284.4L281.7 14.8Z" fill="#7d848e"/>
<rect x="291.9" y="9.8" width="8.2" height="1.3" fill="#d9d9d9"/><path d="M291.9 12.7H300.1L296 17.2Z" fill="#d9d9d9"/>
<path d="M504.4 9.6L509.2 14L504.4 18.4Z" fill="#dadada"/>
<g fill="#ececec"><path d="M700.4 7.6H703.6L704.4 11H705V21H698.8V13.2Z"/><path d="M711.6 7.6H708.4L707.6 11H707V21H713.2V13.2Z"/><rect x="704.6" y="10.4" width="2.8" height="3.6"/></g><path d="M698.8 15.6H705M707 15.6H713.2" stroke="#7d838d" stroke-width="1"/>
<circle cx="730.1" cy="10.4" r="4.3" fill="#6f9ff2"/><path d="M722.8 20.6C722.8 17 726 15.6 728 15.6H732.2C734.2 15.6 737.4 17 737.4 20.6Z" fill="#6f9ff2"/><path d="M727.6 8.6a3 3 0 0 1 4-1.6" stroke="#a9c8ff" stroke-width="1" fill="none"/>
<path d="M828 13H833.4L830.7 15.8Z" fill="#d0d0d0"/>
<path d="M844 8.4H846.6L848.4 17.4H853M847.2 10.6H853" stroke="#f0f0f0" stroke-width="1.5" fill="none"/><circle cx="850" cy="20" r="1.4" fill="#f0f0f0"/>
<path d="M9 59H33L41 67V83H9Z" fill="#d9d9d9"/><path d="M33 59V67H41Z" fill="#fafafa"/><path d="M12.2 61.8H32.4V67.6H38V80H12.2Z" fill="#22b14c"/>
<path d="M55 59H79L87 67V83H55Z" fill="#d9d9d9"/><path d="M79 59V67H87Z" fill="#fafafa"/><rect x="73" y="75" width="14" height="8" fill="#f83434"/>
<rect x="102" y="64" width="28" height="21" fill="#d9d9d9"/><rect x="105" y="67.2" width="16" height="9.6" fill="#22b14c"/><rect x="119" y="79.2" width="11" height="5.8" fill="#f83434"/>
<path d="M124.6 68.6H131.2V70.6C131.2 72.8 129.8 74.3 127.9 74.3C126 74.3 124.6 72.8 124.6 70.6Z" fill="#f4f4f4" stroke="#4a5263" stroke-width="1"/><circle cx="127.9" cy="62.8" r="6.2" fill="#ffd272"/>
<rect x="146" y="55" width="25.1" height="30" fill="#6c6c6c"/><rect x="146" y="55" width="25.1" height="4.8" fill="#9e9e9e"/><rect x="148" y="57" width="3" height="1" fill="#3a4250"/>
<rect x="146" y="60.1" width="4.9" height="4.3" fill="#dcdcdc"/><rect x="152.1" y="60.1" width="19" height="4.3" fill="#dcdcdc"/>
<rect x="146" y="65.0" width="4.9" height="4.3" fill="#dcdcdc"/><rect x="152.1" y="65.0" width="19" height="4.3" fill="#dcdcdc"/>
<rect x="146" y="70.0" width="4.9" height="4.3" fill="#dcdcdc"/><rect x="152.1" y="70.0" width="19" height="4.3" fill="#dcdcdc"/>
<rect x="146" y="75.0" width="4.9" height="4.3" fill="#dcdcdc"/><rect x="152.1" y="75.0" width="19" height="4.3" fill="#dcdcdc"/>
<rect x="146" y="80.0" width="4.9" height="5.0" fill="#dcdcdc"/><rect x="152.1" y="80.0" width="19" height="5.0" fill="#dcdcdc"/>
<rect x="161" y="69.8" width="18.2" height="18.2" fill="#3b4453"/><rect x="162" y="70.8" width="16.2" height="16.2" fill="#ffffff"/><rect x="163" y="71.8" width="14.2" height="14.2" fill="#f6f6f6"/>
<rect x="165" y="74.1" width="1.9" height="1.9" fill="#0a84e8"/><rect x="168" y="75.0" width="7.1" height="1" fill="#0a84e8"/>
<rect x="165" y="78.1" width="1.9" height="1.9" fill="#0a84e8"/><rect x="168" y="79.0" width="7.1" height="1" fill="#0a84e8"/>
<rect x="165" y="82.0" width="1.9" height="1.9" fill="#0a84e8"/><rect x="168" y="82.9" width="7.1" height="1" fill="#0a84e8"/>
<path d="M193.0 55.5H221.0V81.5H193.0ZM193.0 64H221.0M193.0 69.7H221.0M193.0 75.5H221.0M202.2 64V81.5M211.6 64V81.5" stroke="#e2e2e2" stroke-width="1.25" fill="none"/>
<g stroke="#3b4453" stroke-width="2.6" fill="none"><path d="M205.8 68L219.5 81M225.2 67.4L211.4 81"/><circle cx="210.3" cy="82.6" r="2.6"/><circle cx="220.7" cy="82.6" r="2.6"/></g>
<path d="M205 67L208.6 67.6L217.4 77.6L215.4 79.4Z M226 66.4L222.4 67L213.6 77.6L215.6 79.4Z" fill="#fff"/><g stroke="#fff" stroke-width="1.7" fill="none"><circle cx="210.3" cy="82.6" r="2.6"/><circle cx="220.7" cy="82.6" r="2.6"/><path d="M212 80.6L215.5 77M219 80.6L215.5 77"/></g>
<path d="M240.2 55.5H268.2V81.5H240.2ZM240.2 64H268.2M240.2 69.7H268.2M240.2 75.5H268.2M249.4 64V81.5M258.8 64V81.5" stroke="#e2e2e2" stroke-width="1.25" fill="none"/>
<path d="M256 82.6L267.3 71.8V67.9H273.1V87.4H253V81.9H256Z" fill="#3b4453"/><path d="M257.3 81.6H267.2V72.2Z" fill="#f4b183"/><rect x="268.3" y="69" width="3.8" height="17.4" fill="#d2d2d2"/><rect x="254" y="82.9" width="12.8" height="3.5" fill="#d2d2d2"/>
<rect x="281.2" y="55" width="23.8" height="26" fill="#d9d9d9"/>
<rect x="287.2" y="61.1" width="1.7" height="1.7" fill="#555"/><rect x="290.6" y="61.5" width="8.6" height="1" fill="#666"/>
<rect x="287.2" y="67.2" width="1.7" height="1.7" fill="#555"/><rect x="290.6" y="67.6" width="8.6" height="1" fill="#666"/>
<rect x="287.2" y="73.5" width="1.7" height="1.7" fill="#555"/><rect x="290.6" y="73.8" width="8.6" height="1" fill="#666"/>
<rect x="296.8" y="70.2" width="16.2" height="16.6" fill="#3b4453"/><rect x="297.9" y="71.3" width="2.5" height="14.5" fill="#fff"/><rect x="309.4" y="71.3" width="2.5" height="14.5" fill="#fff"/><rect x="301.2" y="74.6" width="7.4" height="8.2" fill="url(#gP)"/>
<path d="M331.2 55.5H359.2V81.5H331.2ZM331.2 64H359.2M331.2 69.7H359.2M331.2 75.5H359.2M340.4 64V81.5M349.8 64V81.5" stroke="#e2e2e2" stroke-width="1.25" fill="none"/>
<path d="M347 87L348.6 80.4L358.6 70.4C360 69 362.4 69.4 363.4 70.8C364.6 72.2 364.6 74 363.4 75.2L353.4 85.2Z" fill="#3b4453"/>
<path d="M348.2 85.8L349.4 81.6L352.4 84.6Z" fill="#b8b8b8"/><path d="M349.4 81.6L357.6 73.4L360.6 76.4L352.4 84.6Z" fill="#f2cd6c"/><path d="M357.6 73.4L359 72C360 71 361.6 71 362.4 72C363.4 73 363.2 74 362.2 75L360.6 76.4Z" fill="#f2505a"/>
<g stroke="#d4d4d4" stroke-width="1" fill="none"><circle cx="404.9" cy="70.5" r="14.6"/><path d="M404.6 56.6H390.3V68M419.9 56.2L415.3 60.7M390.2 85.3L394.8 81.2M419.9 85.3L415.3 81.2"/><path d="M400.2 77V64.4L409.8 77V64.4" stroke-width="1.1"/></g>
<rect x="459.3" y="57" width="9.8" height="9.4" fill="#d9d9d9"/><rect x="470.3" y="57" width="16.8" height="9.4" fill="#d9d9d9"/><rect x="459.3" y="67.7" width="13" height="10.2" fill="#d9d9d9"/>
<path d="M472.7 66.4H482.6L490.8 75.4L481.8 84.5L472.7 74.6Z" fill="#cdcdcd" stroke="#3b4453" stroke-width="1"/><circle cx="476" cy="69.6" r="0.9" fill="#3b4453"/><path d="M478.4 72.6L483.8 69.4M480.2 75.2L485.8 72M482 77.8L487.6 74.6M477.4 72.2l.6 .6M479.2 74.9l.6 .6M481 77.5l.6 .6" stroke="#4a5263" stroke-width=".8"/>
<path d="M529.4 77.1V67.2L542.9 55.3L556.5 67.2V73" stroke="#e6e6e6" stroke-width="1" fill="none"/><path d="M530.8 80.8L542.9 69L551.8 77.6" stroke="#f0f0f0" stroke-width="3.6" fill="none" stroke-linecap="round" stroke-linejoin="miter"/><path d="M555 78L559.4 74" stroke="#f4f4f4" stroke-width="3" stroke-linecap="round"/><path d="M553.8 79.6C554.4 84.4 548.6 87.2 543 86.6C546.4 85 547.6 81.4 551.4 78.8Z" fill="#d9a466"/>
<path d="M615.4 71.8L620 67.7L627.4 74.9L642.2 59.8L646.3 64L627.4 83.3Z" fill="#5fd587"/>
<rect x="790" y="192.6" width="10.2" height="3.2" fill="#ececec"/>
<path d="M812.8 188.8V187.4H819.4V194.4H817.2" stroke="#e6e6e6" stroke-width="1.4" fill="none"/><rect x="810.6" y="189.8" width="5.6" height="6" stroke="#ececec" stroke-width="1.8" fill="none"/>
<path d="M830.4 188.2L838.8 196M838.8 188.2L830.4 196" stroke="#f2f2f2" stroke-width="2.4"/>
<path d="M794 340H803L798.5 345.6Z" fill="#a9a9b8" stroke="#666676" stroke-width="1"/>
<rect x="6.0" y="734.0" width="1.8" height="1.8" fill="#e8e8e8"/>
<rect x="9.0" y="734.0" width="1.8" height="1.8" fill="#e8e8e8"/>
<rect x="12.0" y="734.0" width="1.8" height="1.8" fill="#e8e8e8"/>
<rect x="15.0" y="734.0" width="1.8" height="1.8" fill="#e8e8e8"/>
<rect x="18.0" y="734.0" width="1.8" height="1.8" fill="#e8e8e8"/>
<rect x="21.0" y="734.0" width="1.8" height="1.8" fill="#e8e8e8"/>
<rect x="6.0" y="737.0" width="1.8" height="1.8" fill="#e8e8e8"/>
<rect x="9.0" y="737.0" width="1.8" height="1.8" fill="#e8e8e8"/>
<rect x="12.0" y="737.0" width="1.8" height="1.8" fill="#e8e8e8"/>
<rect x="15.0" y="737.0" width="1.8" height="1.8" fill="#e8e8e8"/>
<rect x="18.0" y="737.0" width="1.8" height="1.8" fill="#e8e8e8"/>
<rect x="21.0" y="737.0" width="1.8" height="1.8" fill="#e8e8e8"/>
<path d="M9 746.6L16.6 754M16.6 746.6L9 754" stroke="#e4e4e4" stroke-width="1.9"/>
<path d="M8.6 780.4L15.6 773.4" stroke="#ececec" stroke-width="2.4" stroke-linecap="round"/><path d="M19.6 769.6C17.6 768.8 15.4 769.8 14.8 771.8C14.4 773.2 15 774.8 16.4 775.6C18 776.4 20 775.8 20.8 774.2L18 773.6L17.4 771.6Z" fill="#ececec"/>
<rect x="33.4" y="777.4" width="15" height="11.4" fill="#f4f4f4" stroke="#555" stroke-width="1"/><rect x="33.4" y="777.4" width="15" height="2.4" fill="#555"/><path d="M35.4 782L38 783.8L35.4 785.6M39 786.4H42.6" stroke="#444" stroke-width="1" fill="none"/>
<path d="M51.4 780.6H58.6L55 784.6Z" fill="#666"/>
<path d="M571.2 803V817.6M574.8 803V817.6M578.4 803V817.6M566.8 806.4H582.8M566.8 810H582.8M566.8 813.6H582.8" stroke="#ffffff" stroke-width="1.25"/>
<rect x="593.3" y="804.1" width="1.9" height="1.9" fill="#fff"/>
<rect x="598.2" y="804.1" width="1.9" height="1.9" fill="#fff"/>
<rect x="603.1" y="804.1" width="1.9" height="1.9" fill="#fff"/>
<rect x="593.3" y="808.7" width="1.9" height="1.9" fill="#fff"/>
<rect x="598.2" y="808.7" width="1.9" height="1.9" fill="#fff"/>
<rect x="603.1" y="808.7" width="1.9" height="1.9" fill="#fff"/>
<rect x="593.3" y="813.3" width="1.9" height="1.9" fill="#fff"/>
<rect x="598.2" y="813.3" width="1.9" height="1.9" fill="#fff"/>
<rect x="603.1" y="813.3" width="1.9" height="1.9" fill="#fff"/>
<path d="M614.8 808.2H622.2L618.5 812.2Z" fill="#d4d4d4"/>
<path d="M680.8 808.2H688.2L684.5 812.2Z" fill="#d4d4d4"/>
<path d="M719.9 808.2H727.3L723.6 812.2Z" fill="#d4d4d4"/>
<path d="M784.0 808.2H791.4L787.7 812.2Z" fill="#d4d4d4"/>
<path d="M633.5 802.2V817.2H648.8M633.5 813H638V817.2" stroke="#e6e6e6" stroke-width="1.2" fill="none"/>
<circle cx="664.6" cy="810.6" r="6.5" stroke="#fff" stroke-width="1.2" fill="none"/><path d="M664.6 810.6H673.2M664.6 810.6L671 802.7" stroke="#fff" stroke-width="1.2"/>
<path d="M703.7 802.4V816.5" stroke="#4fd36a" stroke-width="1.1"/><path d="M697.1 803.1L710 816" stroke="#f0505a" stroke-width="1.1"/><rect x="702.3" y="807.8" width="2.8" height="2.8" fill="#fff"/><rect x="703.2" y="808.7" width="1" height="1" fill="#333"/>
<path d="M748.8 804L735.8 815H752.4" stroke="#fff" stroke-width="1.2" fill="none"/><rect x="741" y="808" width="2.8" height="2.8" fill="#fff"/>
<rect x="762.7" y="804.4" width="13" height="12.6" stroke="#fff" stroke-width="1.2" fill="none"/><rect x="760.3" y="802" width="4.4" height="4.4" fill="#5b8ec9" stroke="#fff" stroke-width="1"/>
<path d="M809.05 802.28L811.05 807.08L810.31 810.03L815.85 817.79L812.16 816.31L809.05 813.73L805.88 816.31L802.19 817.79L807.73 810.03L806.99 807.08Z" fill="#fff"/>
<circle cx="815.1" cy="806" r="2.5" stroke="#fff" stroke-width="1.2" fill="none"/>
<path d="M833.05 802.28L835.05 807.08L834.31 810.03L839.85 817.79L836.16 816.31L833.05 813.73L829.88 816.31L826.19 817.79L831.73 810.03L830.99 807.08Z" fill="#d2d2d2"/>
<path d="M840.2 802.3L836.2 806L838.4 806.3L836.5 809.7L841.3 805.6L838.9 805.2Z" fill="#d2d2d2"/>
<path d="M851.2 818L853 814.6V818Z" fill="#d2d2d2"/>
</svg>
</body></html>
